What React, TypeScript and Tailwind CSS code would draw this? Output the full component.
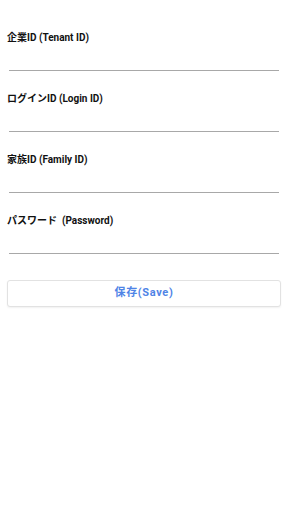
import React from "react";

const fields = [
  "企業ID (Tenant ID)",
  "ログインID (Login ID)",
  "家族ID (Family ID)",
  "パスワード  (Password)",
];

export default function App() {
  return (
    <div
      className="w-[288px] h-[512px] bg-white"
      style={{ fontFamily: "Roboto, 'Noto Sans CJK JP', sans-serif" }}
    >
      <div className="pt-[28px] flex flex-col">
        {fields.map((f, i) => (
          <div key={i} className="flex flex-col mb-[18px]">
            <div className="h-[18px] leading-[19px] px-[7px] text-[10px] font-bold text-[#111] whitespace-pre">
              {f}
            </div>
            <div className="mx-[9px] h-[25px] border-b border-[#a8a8a8]" />
          </div>
        ))}
        <div className="px-[7px] mt-[7px]">
          <button className="w-full h-[27px] border border-[#e2e2e2] rounded-[3px] bg-white shadow-[0_1px_2px_rgba(0,0,0,0.06)] text-[11px] font-bold tracking-[0.06em] text-[#4f84e6]">
            保存(Save)
          </button>
        </div>
      </div>
    </div>
  );
}
